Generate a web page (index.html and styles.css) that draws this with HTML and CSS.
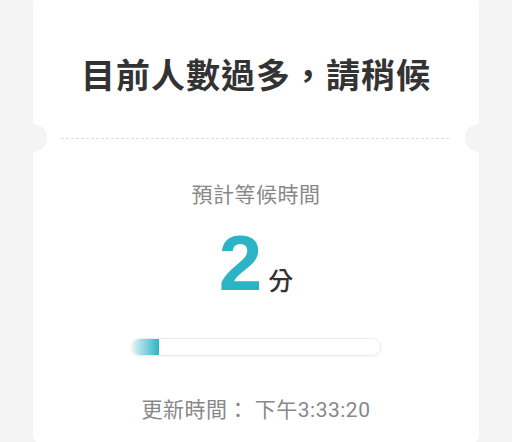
FILE: index.html
```html
<!DOCTYPE html>
<html lang="zh-Hant">
<head>
    <meta charset="UTF-8">
    <meta name="viewport" content="width=device-width, initial-scale=1.0">
    <title>排隊等候</title>
    <link rel="stylesheet" href="styles.css">
</head>
<body>
    <div class="queue-page">
        <div class="ticket">
            <div class="ticket-head">
                <h1>目前人數過多，請稍候</h1>
            </div>
            <div class="ticket-cut"></div>
            <div class="ticket-body">
                <div class="wait-label">預計等候時間</div>
                <div class="wait-time">
                    <span class="wait-num">2</span>
                    <span class="wait-unit">分</span>
                </div>
                <div class="progress">
                    <div class="progress-bar" style="width: 11%"></div>
                </div>
                <div class="updated">更新時間： 下午3:33:20</div>
            </div>
        </div>
    </div>
</body>
</html>
```

FILE: styles.css
```css
:root {
    --page-bg: #f4f4f4;
    --teal: #2bb4c6;
    --text-dark: #333;
    --text-grey: #888;
}

* {
    margin: 0;
    padding: 0;
    box-sizing: border-box;
}

body {
    background: var(--page-bg);
    font-family: Roboto, "Noto Sans CJK TC", sans-serif;
    overflow: hidden;
}

.queue-page {
    padding: 0 33px;
}

.ticket {
    margin-top: -6px;
    height: 452px;
    background: #fff;
    border-radius: 12px;
}

.ticket-head {
    padding: 63px 0 47px;
    text-align: center;
}

h1 {
    font-family: "Noto Sans CJK TC", sans-serif;
    font-size: 34px;
    font-weight: 700;
    line-height: 1;
    letter-spacing: 1px;
    color: var(--text-dark);
}

/* dashed tear line with the two half-circle notches */
.ticket-cut {
    position: relative;
    margin: 0 30px 0 28px;
    border-top: 1px dashed #dcdcdc;
}

.ticket-cut::before,
.ticket-cut::after {
    content: '';
    position: absolute;
    top: -15px;
    width: 28px;
    height: 28px;
    border-radius: 50%;
    background: var(--page-bg);
}

.ticket-cut::before { left: -42px; }
.ticket-cut::after { right: -44px; }

.ticket-body {
    display: flex;
    flex-direction: column;
    align-items: center;
    padding-top: 44px;
}

.wait-label {
    font-family: "Noto Sans CJK TC", sans-serif;
    font-size: 21px;
    line-height: 1;
    letter-spacing: 0.5px;
    color: var(--text-grey);
}

.wait-time {
    display: flex;
    align-items: baseline;
    margin-top: 20px;
    line-height: 1;
}

.wait-num {
    font-family: "Liberation Sans", Arial, sans-serif;
    font-size: 78px;
    font-weight: 700;
    color: var(--teal);
}

.wait-unit {
    margin-left: 6px;
    font-family: "Noto Sans CJK TC", sans-serif;
    font-size: 25px;
    font-weight: 500;
    color: var(--text-dark);
}

.progress {
    width: 250px;
    height: 18px;
    margin-top: 36px;
    border: 1px solid #ececec;
    border-radius: 9px;
    background: #fff;
    box-shadow: 0 1px 2px rgba(0, 0, 0, 0.05);
    overflow: hidden;
}

.progress-bar {
    height: 100%;
    border-radius: 9px 0 0 9px;
    background: linear-gradient(90deg, #e2f3f6, var(--teal));
}

.updated {
    margin-top: 44px;
    font-size: 21px;
    line-height: 1;
    letter-spacing: 0.5px;
    color: var(--text-grey);
    white-space: pre;
}
```
